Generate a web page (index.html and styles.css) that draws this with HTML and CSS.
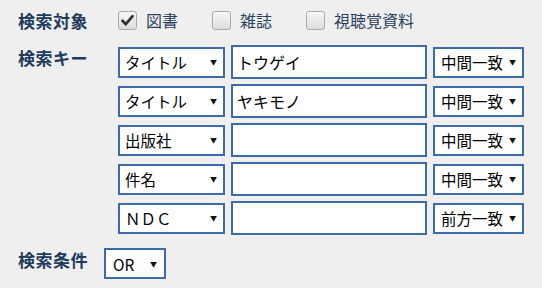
FILE: index.html
```html
<!DOCTYPE html>
<html lang="ja">
<head>
<meta charset="utf-8">
<link rel="stylesheet" href="styles.css">
</head>
<body>
<form class="search">
  <div class="row target">
    <div class="label">検索対象</div>
    <label class="check"><span class="box"><svg viewBox="0 0 19 19" width="19" height="19"><path d="M4.5 9.8 L7.8 13.2 L14.6 5.2" fill="none" stroke="#333" stroke-width="2.8" stroke-linecap="round" stroke-linejoin="round"/></svg></span><span class="ctext">図書</span></label>
    <label class="check"><span class="box"></span><span class="ctext">雑誌</span></label>
    <label class="check"><span class="box"></span><span class="ctext">視聴覚資料</span></label>
  </div>

  <div class="row keys">
    <div class="label klabel">検索キー</div>
    <div class="keylist">
      <div class="keyrow">
        <div class="sel field"><span>タイトル</span><span class="arrow">▼</span></div>
        <div class="text">トウゲイ</div>
        <div class="sel match"><span>中間一致</span><span class="arrow">▼</span></div>
      </div>
      <div class="keyrow">
        <div class="sel field"><span>タイトル</span><span class="arrow">▼</span></div>
        <div class="text">ヤキモノ</div>
        <div class="sel match"><span>中間一致</span><span class="arrow">▼</span></div>
      </div>
      <div class="keyrow">
        <div class="sel field"><span>出版社</span><span class="arrow">▼</span></div>
        <div class="text"></div>
        <div class="sel match"><span>中間一致</span><span class="arrow">▼</span></div>
      </div>
      <div class="keyrow">
        <div class="sel field"><span>件名</span><span class="arrow">▼</span></div>
        <div class="text"></div>
        <div class="sel match"><span>中間一致</span><span class="arrow">▼</span></div>
      </div>
      <div class="keyrow">
        <div class="sel field"><span>ＮＤＣ</span><span class="arrow">▼</span></div>
        <div class="text"></div>
        <div class="sel match"><span>前方一致</span><span class="arrow">▼</span></div>
      </div>
    </div>
  </div>

  <div class="row cond">
    <div class="label clabel">検索条件</div>
    <div class="sel op"><span>OR</span><span class="arrow">▼</span></div>
  </div>
</form>
</body>
</html>
```

FILE: styles.css
```css
html, body {
  margin: 0;
  padding: 0;
  background: #efefef;
}
body {
  font-family: "Noto Sans CJK JP", "Noto Sans", sans-serif;
  color: #000;
  width: 542px;
  height: 288px;
  overflow: hidden;
}
.search {
  padding: 11px 0 0 18px;
}
.row {
  display: flex;
}
.label {
  font-size: 17px;
  letter-spacing: 0.5px;
  font-weight: bold;
  color: #1e3a5c;
  line-height: 20px;
  width: 100px;
  flex: none;
}
.target {
  align-items: center;
  height: 19px;
}
.target .label {
  margin-top: 1px;
}
.check {
  display: flex;
  align-items: center;
  margin-right: 34px;
}
.box {
  width: 17px;
  height: 17px;
  border: 1px solid #aaa;
  border-radius: 3px;
  background: linear-gradient(#f8f8f8, #dcdcdc);
  display: flex;
  align-items: center;
  justify-content: center;
  overflow: hidden;
}
.box svg {
  flex: none;
}
.ctext {
  font-size: 16px;
  color: #2a3f5e;
  margin-left: 9px;
  line-height: 19px;
}
.keys {
  margin-top: 15px;
}
.klabel {
  padding-top: 2px;
  line-height: 22px;
}
.keylist {
  display: flex;
  flex-direction: column;
  gap: 5px;
}
.keyrow {
  display: flex;
  align-items: center;
  gap: 6px;
  height: 34px;
}
.sel {
  box-sizing: border-box;
  height: 31px;
  border: 2px solid #3d6aa8;
  background: #fff;
  display: flex;
  align-items: center;
  justify-content: space-between;
  padding: 0 6px 0 5px;
  font-size: 15.5px;
  line-height: 20px;
  color: #000;
}
.arrow {
  font-size: 7px;
  color: #111;
  line-height: 10px;
}
.field {
  width: 107px;
}
.match {
  width: 91px;
  padding-left: 6px;
}
.text {
  box-sizing: border-box;
  width: 196px;
  height: 34px;
  border: 2px solid #3d6aa8;
  background: #fff;
  font-size: 16px;
  line-height: 30px;
  padding: 0 4px;
}
.cond {
  margin-top: 13px;
  align-items: flex-start;
}
.clabel {
  width: 86px;
  line-height: 24px;
}
.op {
  width: 62px;
  padding-left: 7px;
  padding-right: 7px;
}
```
